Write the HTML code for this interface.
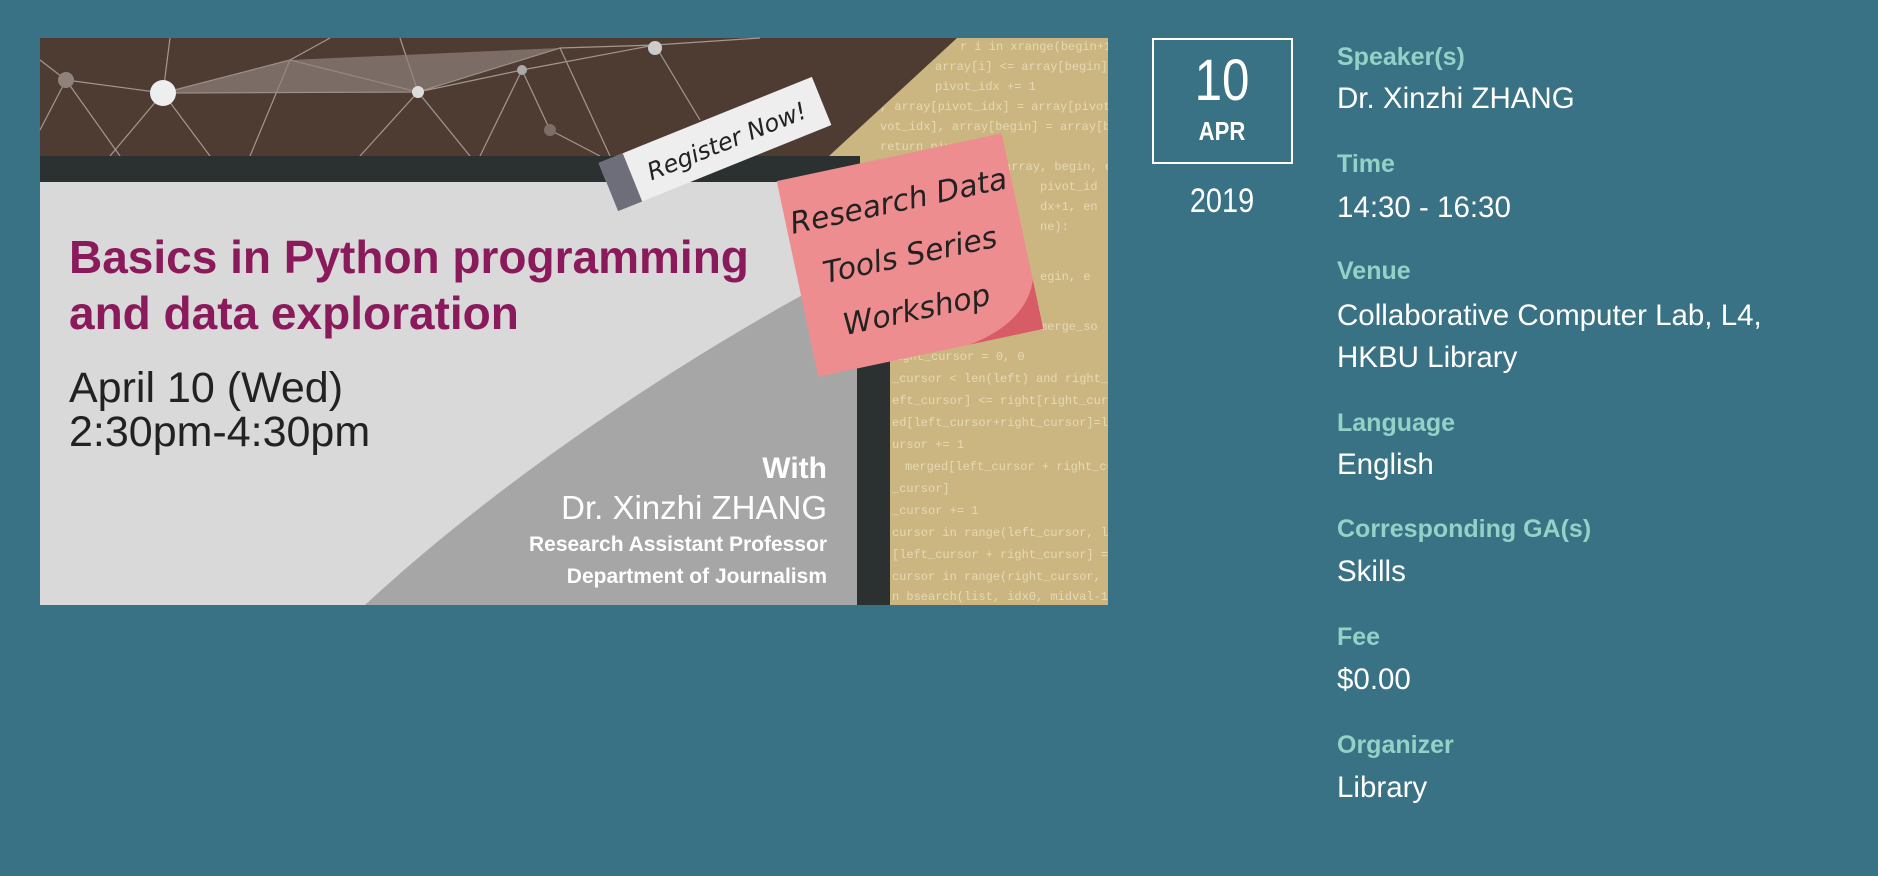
<!DOCTYPE html>
<html><head><meta charset="utf-8"><style>
html,body{margin:0;padding:0;background:#3a7285;width:1878px;height:876px;overflow:hidden}
svg{display:block}
.l{font-family:"Liberation Sans",sans-serif;font-weight:bold;font-size:25px;fill:#93d2c6}
.v{font-family:"Liberation Sans",sans-serif;font-size:29.5px;fill:#fff}
.c{font-family:"Liberation Mono",monospace;font-size:12px;fill:#e6d9b4}
</style></head><body>
<svg width="1878" height="876" viewBox="0 0 1878 876" xmlns="http://www.w3.org/2000/svg">
<defs><clipPath id="bn"><rect x="40" y="38" width="1068" height="567"/></clipPath></defs>
<rect width="1878" height="876" fill="#3a7285"/>
<g clip-path="url(#bn)">
<rect x="40" y="38" width="1068" height="567" fill="#cbb682"/>
<g class="c">
<text x="960" y="50">r i in xrange(begin+1, e</text>
<text x="935" y="70">array[i] &lt;= array[begin]:</text>
<text x="935" y="90">pivot_idx += 1</text>
<text x="880" y="110">, array[pivot_idx] = array[pivot_id</text>
<text x="880" y="130">vot_idx], array[begin] = array[begin</text>
<text x="880" y="150">return pivot_idx</text>
<text x="860" y="170">vot_idx = partition(array, begin, end)</text>
<text x="1040" y="190">pivot_id</text>
<text x="1040" y="210">dx+1, en</text>
<text x="1040" y="230">ne):</text>
<text x="1040" y="280">egin, e</text>
<text x="1040" y="330">merge_so</text>
<text x="895" y="360">ight_cursor = 0, 0</text>
<text x="892" y="382">_cursor &lt; len(left) and right_cursor</text>
<text x="892" y="404">eft_cursor] &lt;= right[right_cursor]:</text>
<text x="892" y="426">ed[left_cursor+right_cursor]=left[</text>
<text x="892" y="448">ursor += 1</text>
<text x="905" y="470">merged[left_cursor + right_cur</text>
<text x="892" y="492">_cursor]</text>
<text x="892" y="514">_cursor += 1</text>
<text x="892" y="536">cursor in range(left_cursor, len(lef</text>
<text x="892" y="558">[left_cursor + right_cursor] = left[</text>
<text x="892" y="580">cursor in range(right_cursor, len(r</text>
<text x="892" y="600">n bsearch(list, idx0, midval-1,val)</text>
</g>
</g>
<polygon points="40,38 957,38 829,156 40,156" fill="#4e3c33"/>
<g stroke="#b9aea6" stroke-width="1.2" fill="none" opacity="0.8">
<polyline points="66,80 163,93 290,60 418,92 560,48 655,45"/>
<polyline points="163,93 418,92 522,70 655,45"/>
<polyline points="66,80 120,156"/>
<path d="M163,93 110,156 M163,93 210,156 M418,92 360,156 M418,92 470,156 M550,130 600,156 M550,130 522,70 M290,60 250,156 M522,70 480,156 M40,60 66,80 M66,80 40,130 M163,93 170,38 M290,60 330,38 M418,92 400,38 M560,48 610,156 M655,45 700,120 M655,45 760,38"/>
</g>
<polygon points="163,93 290,60 560,48 418,92" fill="#8e827a" opacity="0.7"/>
<circle cx="163" cy="93" r="13" fill="#eee"/>
<circle cx="66" cy="80" r="8" fill="#8e827a"/>
<circle cx="418" cy="92" r="6" fill="#ddd"/>
<circle cx="655" cy="48" r="7" fill="#ccc"/>
<circle cx="522" cy="70" r="5" fill="#aaa"/>
<circle cx="550" cy="130" r="6" fill="#7a6e66"/>
<rect x="40" y="156" width="820" height="26" fill="#2b3130"/>
<rect x="40" y="182" width="817" height="423" fill="#d9d9d9"/>
<path d="M365,605 C500,480 680,360 830,280 L857,270 L857,605 Z" fill="#a6a6a6"/>
<rect x="857" y="270" width="33" height="335" fill="#2b3130"/>
<g transform="translate(715,144) rotate(-22)">
<rect x="-115" y="-26" width="230" height="52" fill="#eeeeee"/>
<rect x="-115" y="-26" width="26" height="52" fill="#6e6e7a"/>
<text x="12" y="10" text-anchor="middle" font-family="'DejaVu Sans',sans-serif" font-style="italic" font-size="24" fill="#222">Register Now!</text>
</g>
<g transform="translate(910,255) rotate(-12)">
<rect x="-115" y="-100" width="230" height="200" fill="#ee8d8f"/>
<path d="M115,50 Q100,90 40,100 L115,100 Z" fill="#d85c66"/>
<g font-family="'DejaVu Sans',sans-serif" font-style="italic" font-size="30" fill="#222" text-anchor="middle">
<text x="0" y="-45">Research Data</text>
<text x="0" y="10">Tools Series</text>
<text x="-5" y="65">Workshop</text>
</g>
</g>
<g font-family="'Liberation Sans',sans-serif">
<text x="69" y="273" font-size="46" font-weight="bold" fill="#8b1a5c">Basics in Python programming</text>
<text x="69" y="329" font-size="46" font-weight="bold" fill="#8b1a5c">and data exploration</text>
<text x="69" y="402" font-size="43" fill="#222">April 10 (Wed)</text>
<text x="69" y="446" font-size="43" fill="#222">2:30pm-4:30pm</text>
<g text-anchor="end" fill="#fff" font-weight="bold">
<text x="827" y="478" font-size="30">With</text>
<text x="827" y="519" font-size="33" font-weight="normal">Dr. Xinzhi ZHANG</text>
<text x="827" y="551" font-size="21">Research Assistant Professor</text>
<text x="827" y="583" font-size="21">Department of Journalism</text>
</g>
</g>
<rect x="1153" y="39" width="139" height="124" fill="none" stroke="#fff" stroke-width="2"/>
<g font-family="'Liberation Sans',sans-serif" fill="#fff" text-anchor="middle">
<text transform="translate(1222,100) scale(0.85,1)" font-size="58">10</text>
<text transform="translate(1222,140) scale(0.85,1)" font-size="26" font-weight="bold">APR</text>
<text transform="translate(1222,212) scale(0.85,1)" font-size="34">2019</text>
</g>
<text class="l" x="1337" y="65">Speaker(s)</text>
<text class="v" x="1337" y="108">Dr. Xinzhi ZHANG</text>
<text class="l" x="1337" y="172">Time</text>
<text class="v" x="1337" y="217">14:30 - 16:30</text>
<text class="l" x="1337" y="279">Venue</text>
<text class="v" x="1337" y="325">Collaborative Computer Lab, L4,</text>
<text class="v" x="1337" y="367">HKBU Library</text>
<text class="l" x="1337" y="431">Language</text>
<text class="v" x="1337" y="474">English</text>
<text class="l" x="1337" y="537">Corresponding GA(s)</text>
<text class="v" x="1337" y="581">Skills</text>
<text class="l" x="1337" y="645">Fee</text>
<text class="v" x="1337" y="689">$0.00</text>
<text class="l" x="1337" y="753">Organizer</text>
<text class="v" x="1337" y="797">Library</text>
</svg>
</body></html>
